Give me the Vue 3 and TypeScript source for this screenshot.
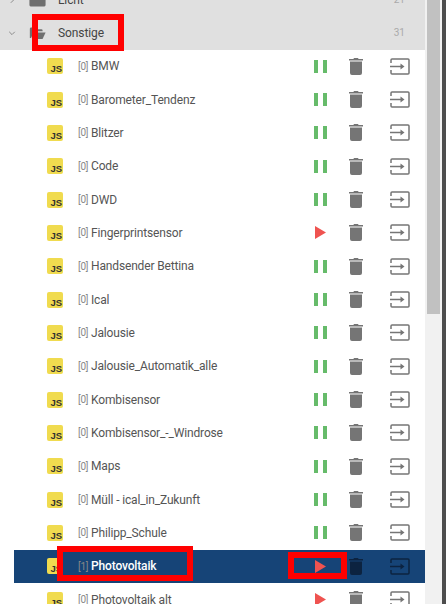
<script setup lang="ts">
interface Row { name: string; count: number; running: boolean; selected?: boolean }
const rows: Row[] = [
  { name: 'BMW', count: 0, running: true },
  { name: 'Barometer_Tendenz', count: 0, running: true },
  { name: 'Blitzer', count: 0, running: true },
  { name: 'Code', count: 0, running: true },
  { name: 'DWD', count: 0, running: true },
  { name: 'Fingerprintsensor', count: 0, running: false },
  { name: 'Handsender Bettina', count: 0, running: true },
  { name: 'Ical', count: 0, running: true },
  { name: 'Jalousie', count: 0, running: true },
  { name: 'Jalousie_Automatik_alle', count: 0, running: true },
  { name: 'Kombisensor', count: 0, running: true },
  { name: 'Kombisensor_-_Windrose', count: 0, running: true },
  { name: 'Maps', count: 0, running: true },
  { name: 'Müll - ical_in_Zukunft', count: 0, running: true },
  { name: 'Philipp_Schule', count: 0, running: true },
  { name: 'Photovoltaik', count: 1, running: false, selected: true },
  { name: 'Photovoltaik alt', count: 0, running: false },
]
</script>

<template>
  <div class="page">
    <div class="list">
      <div class="folder licht">
        <svg class="chev" viewBox="0 0 10 10"><path d="M3.500 1.500 7 5 3.500 8.500" /></svg>
        <svg class="folder-icon" viewBox="0 0 20 16"><path d="M2 1h6l2 2h8a1.500 1.500 0 0 1 1.500 1.500V14a1.500 1.500 0 0 1-1.500 1.500H2A1.500 1.500 0 0 1 .5 14V2.500A1.500 1.500 0 0 1 2 1z" /></svg>
        <span class="folder-name">Licht</span>
        <span class="folder-count">21</span>
      </div>
      <div class="folder">
        <svg class="chev" viewBox="0 0 10 10"><path d="M1.500 3.500 5 7l3.500-3.500" /></svg>
        <svg class="folder-icon" viewBox="0 0 20 16"><path d="M1 3a1.500 1.500 0 0 1 1.500-1.500h5l2 2h5A1.500 1.500 0 0 1 16 5v1H6L2.500 14 1 14z" /><path d="M6.800 7.500H19.500L16 15H3.300z" /></svg>
        <span class="folder-name">Sonstige</span>
        <span class="folder-count">31</span>
      </div>
      <div v-for="row in rows" :key="row.name" class="row" :class="{ selected: row.selected }">
        <span class="js"><b>JS</b></span>
        <span class="count">[{{ row.count }}]</span>
        <span class="name">{{ row.name }}</span>
        <span class="action">
          <span v-if="row.running" class="pause"><i /><i /></span>
          <svg v-else class="play" viewBox="0 0 12 12" preserveAspectRatio="none"><path d="M0 0 12 6 0 12z" /></svg>
        </span>
        <span class="action">
          <svg class="trash" viewBox="0 0 14 17"><path d="M5 0h4l.6 1H14v1.500H0V1h4.400zM1 3.500h12V15a2 2 0 0 1-2 2H3a2 2 0 0 1-2-2z" /></svg>
        </span>
        <span class="action last">
          <svg class="export" viewBox="0 0 20 17"><path class="outline" d="M1 5V2a1 1 0 0 1 1-1h16a1 1 0 0 1 1 1v13a1 1 0 0 1-1 1H2a1 1 0 0 1-1-1v-3" /><path class="outline" d="M0 8.500h11" /><path class="head" d="M10.500 5.500 14.500 8.500 10.500 11.500z" /></svg>
        </span>
      </div>
    </div>
    <div class="scrollbar"><div class="thumb" /></div>
    <div class="edge" />
    <div class="mark mark-folder" />
    <div class="mark mark-name" />
    <div class="mark mark-play" />
  </div>
</template>

<style>
html, body { margin: 0; background: #fff; }
</style>

<style scoped>
.page {
  position: relative;
  width: 446px;
  height: 604px;
  overflow: hidden;
  display: flex;
  background: #fff;
  font-family: Roboto, "Liberation Sans", sans-serif;
  color: #555;
}
.list { width: 425px; margin-top: -17px; flex: none; }
.folder {
  height: 33.300px;
  background: #e0e0e0;
  display: flex;
  align-items: center;
  font-size: 12px;
  letter-spacing: -0.1px;
  color: #444;
}
.chev { width: 8px; height: 8px; margin-left: 8px; fill: none; stroke: #888; stroke-width: 1.200; }
.folder-icon { width: 17px; height: 14px; margin-left: 13px; fill: #6f6f6f; }
.folder-name { margin-left: 12px; }
.folder-count { margin-left: auto; margin-right: 20px; font-size: 10px; color: #aaa; letter-spacing: 0; }
.row {
  height: 33.330px;
  margin-left: 14px;
  padding-left: 33px;
  display: flex;
  align-items: center;
  font-size: 12px;
  letter-spacing: -0.15px;
  color: #555;
}
.row.selected { background: #164477; color: #fff; font-weight: 500; }
.js {
  width: 16px;
  height: 16px;
  border-radius: 2px;
  background: #f0db4f;
  color: #323330;
  font: 700 9.500px "Liberation Sans", sans-serif;
  letter-spacing: 0;
  display: flex;
  align-items: flex-end;
  justify-content: flex-end;
  box-sizing: border-box;
  padding: 0 1px 0 0;
  flex: none;
}
.js b { line-height: 11px; }
.count { margin-left: 15px; font-size: 10px; color: #888; width: 13px; flex: none; font-weight: 400; letter-spacing: -0.2px; }
.name { flex: 1; white-space: nowrap; }
.action { width: 36px; display: flex; justify-content: center; align-items: center; flex: none; }
.action.last { width: 20px; margin-left: 16px; margin-right: 15px; }
.pause { display: flex; gap: 5px; }
.pause i { width: 4px; height: 13px; background: #66bb6a; display: block; }
.play { width: 11px; height: 13px; fill: #ef5350; }
.trash { width: 14px; height: 17px; fill: #757575; }
.selected .trash { fill: #0c2340; }
.export { width: 20px; height: 17px; }
.export .outline { fill: none; stroke: #757575; stroke-width: 1.500; }
.export .head { fill: #757575; }
.selected .export .outline { stroke: #0c2340; }
.selected .export .head { fill: #0c2340; }
.scrollbar { width: 17px; height: 100%; background: #f1f1f1; flex: none; }
.thumb { width: 13px; margin-left: 2px; height: 314px; background: #c1c1c1; }
.edge { width: 4px; height: 100%; background: #4d4d4d; flex: none; }
.mark { position: absolute; border: 6px solid #f00; box-sizing: border-box; }
.mark-folder { left: 32px; top: 14px; width: 92px; height: 37px; }
.mark-name { left: 57px; top: 546px; width: 136px; height: 35px; }
.mark-play { left: 288px; top: 552px; width: 59px; height: 27px; }
</style>
